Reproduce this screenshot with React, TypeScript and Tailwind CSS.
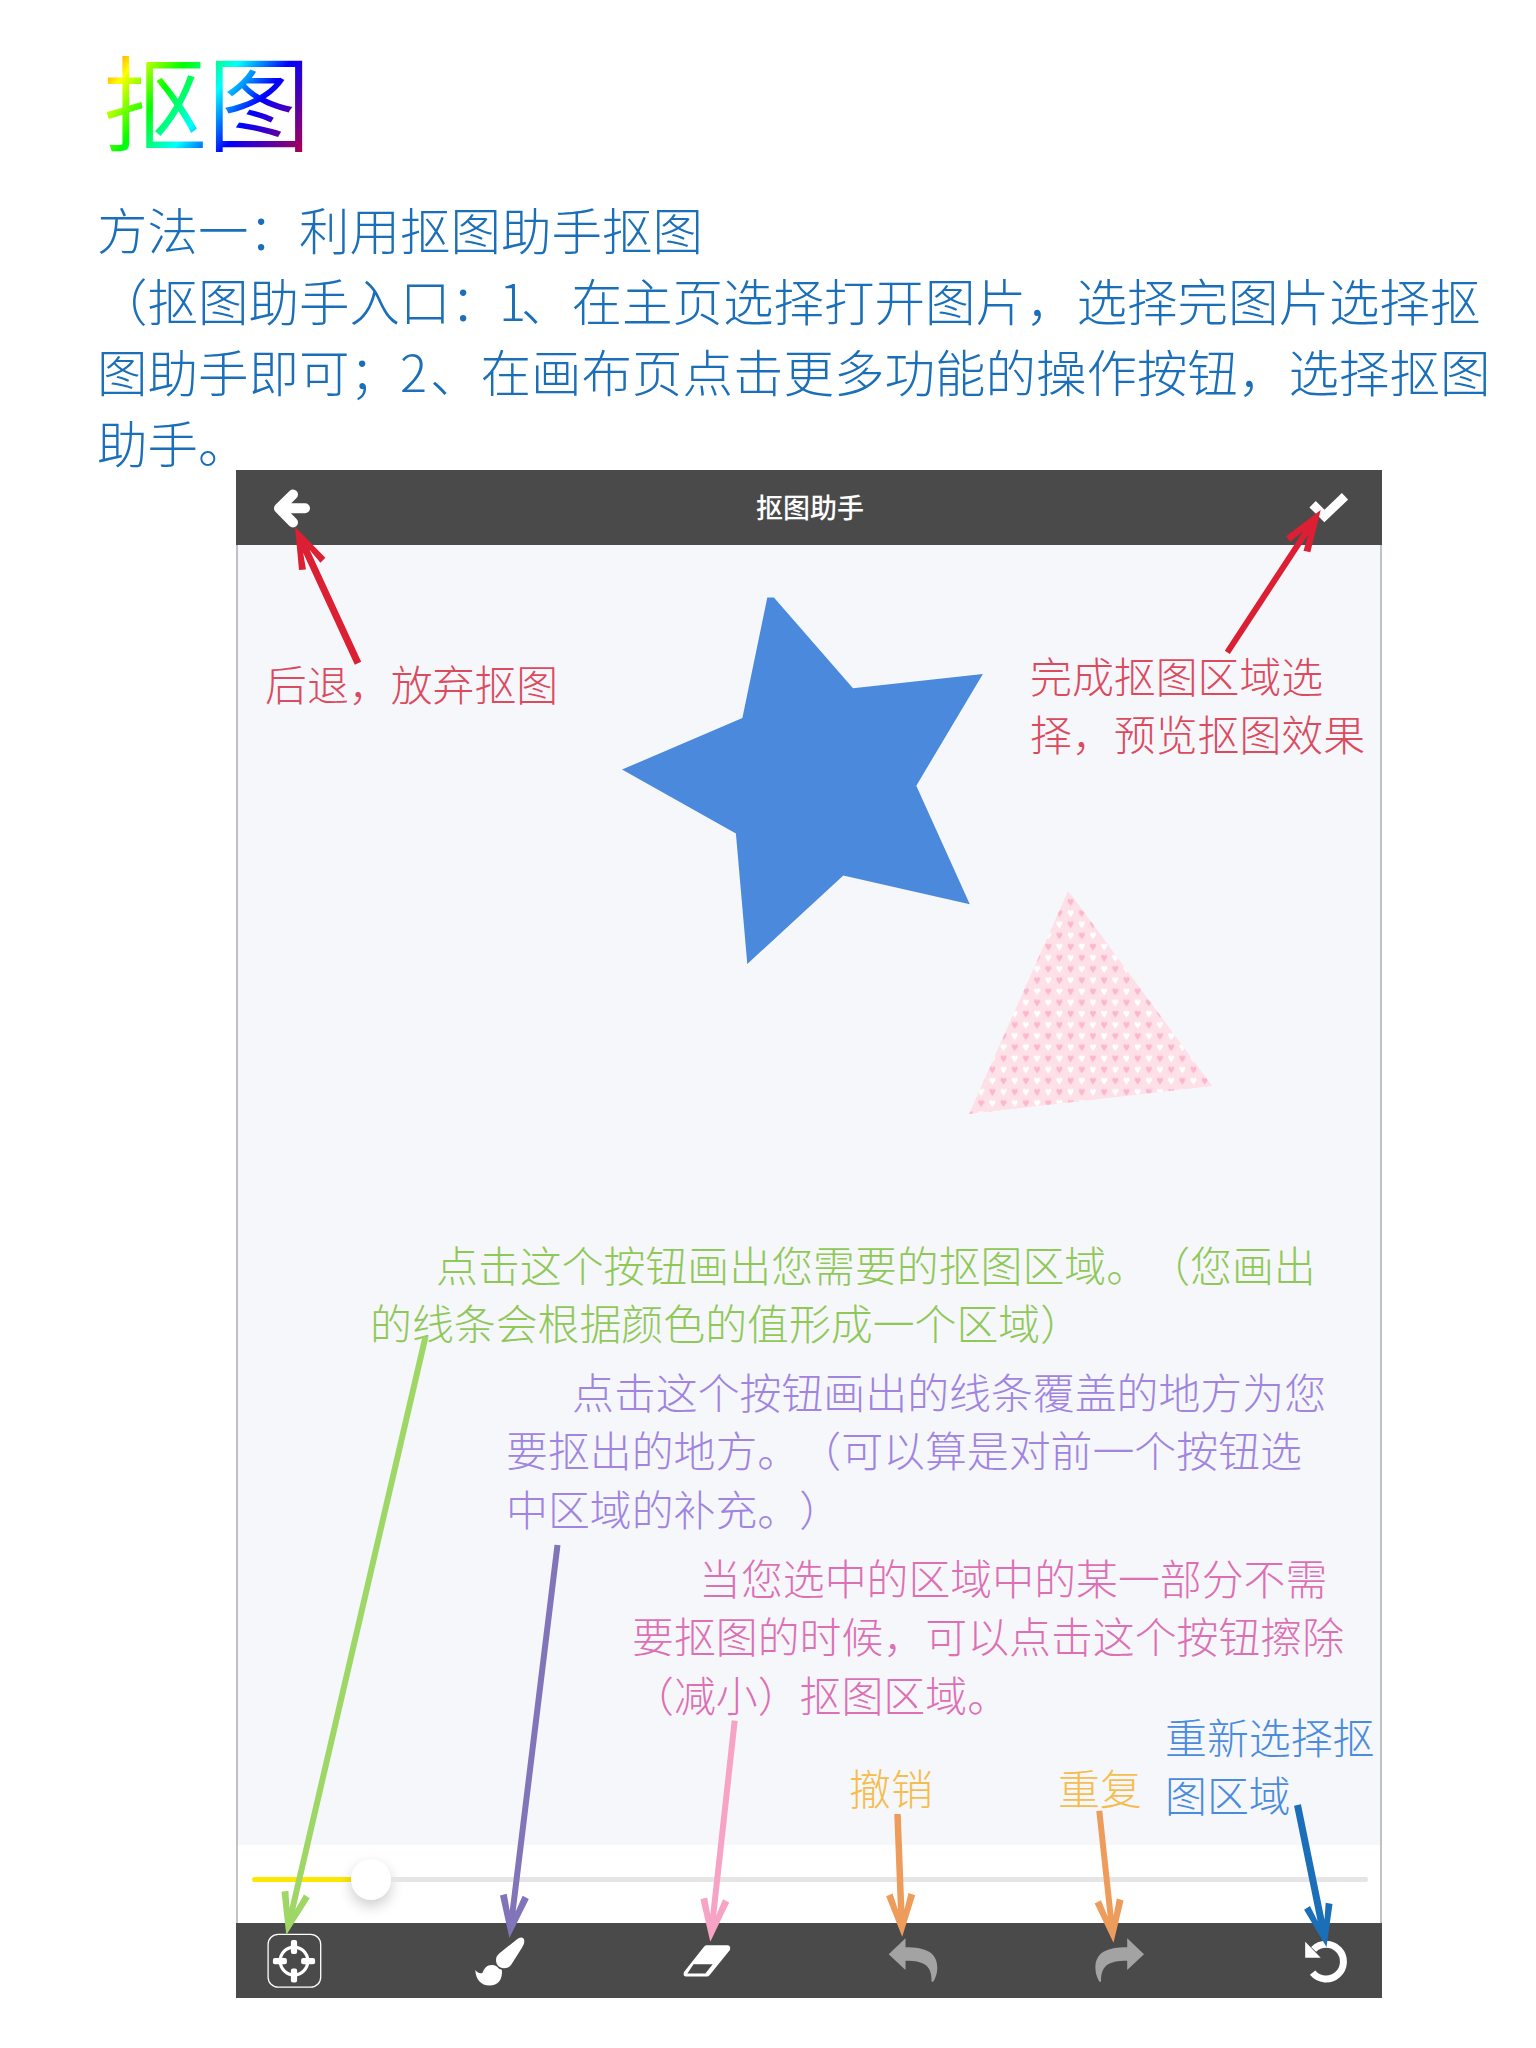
import type { ReactNode } from "react";

type Point = [number, number];

type ArrowSpec = { from: Point; to: Point; color: string; width?: number };

const ARROWS: ArrowSpec[] = [
  { from: [358, 663.3], to: [295, 526.7], color: "#dc1f32", width: 7 },
  { from: [1227.3, 652.3], to: [1320.7, 510], color: "#dc1f32" },
  { from: [425.5, 1336.7], to: [286.3, 1935], color: "#9fd766" },
  { from: [557.5, 1545], to: [509.4, 1938], color: "#8174b8" },
  { from: [734.7, 1720.7], to: [710.3, 1941.7], color: "#f7a3c6" },
  { from: [897.5, 1814], to: [902.2, 1936.7], color: "#ee9c5c", width: 6.5 },
  { from: [1099.3, 1810.7], to: [1113.5, 1942.7], color: "#ee9c5c" },
  { from: [1297.5, 1805], to: [1326.5, 1947], color: "#1a6fb8", width: 7 },
];

function Arrow({ from, to, color, width = 6 }: ArrowSpec) {
  const dx = to[0] - from[0];
  const dy = to[1] - from[1];
  const len = Math.hypot(dx, dy);
  const angle = (Math.atan2(dy, dx) * 180) / Math.PI;
  const h = width / 2;
  return (
    <polygon
      fill={color}
      transform={`translate(${to[0]} ${to[1]}) rotate(${angle})`}
      points={`0,0 -41,-14.5 -43.5,-8 -27,${-h} ${-len},${-h} ${-len},${h} -27,${h} -43.5,8 -41,14.5`}
    />
  );
}

function Note({ className, children }: { className: string; children: ReactNode }) {
  return (
    <p
      className={`absolute whitespace-pre text-[41.9px] leading-[58.4px] font-light ${className}`}
    >
      {children}
    </p>
  );
}

function Heart({ x, y, fill }: { x: number; y: number; fill: string }) {
  return (
    <path
      transform={`translate(${x} ${y})`}
      d="M0 3.8 L-3 -0.6 Q-3.2 -3.2 -1.6 -3.2 Q-0.3 -3.2 0 -1.6 Q0.3 -3.2 1.6 -3.2 Q3.2 -3.2 3 -0.6 Z"
      fill={fill}
    />
  );
}

function Tool({ viewBox, children }: { viewBox: string; children: ReactNode }) {
  return (
    <button className="h-[54px] w-[54px]">
      <svg viewBox={viewBox} className="block h-full w-full overflow-visible">
        {children}
      </svg>
    </button>
  );
}

const UNDO_PATH =
  "M888.7 1954.3 L905.5 1938.3 V1947.3 C926 1947.3 937.3 1952.5 937.3 1968 C937.3 1973.5 935.5 1978 933.3 1981.8 H931.6 C932 1966 925 1960.7 905.5 1960.7 V1970 Z";

export default function App() {
  return (
    <main
      lang="zh-CN"
      className="flex h-[2048px] w-[1536px] flex-col overflow-hidden bg-white font-['Noto_Sans_CJK_SC',sans-serif] [text-spacing-trim:space-all]"
    >
      <h1 className="mt-[31px] ml-[103px] h-[136px] w-[210px] bg-[linear-gradient(127deg,#ff0000_0px,#ffff00_43px,#00ff00_84px,#00ffff_127px,#0000ff_168px,#ff0000_262px)] bg-clip-text text-[104px] leading-[136px] font-[350] whitespace-nowrap text-transparent">
        抠图
      </h1>

      <div className="mt-[26px] ml-[97px] h-[277px] text-[50.5px] leading-[71px] font-light whitespace-nowrap text-[#1a6fb8]">
        <p>方法一：利用抠图助手抠图</p>
        <p>
          （抠图助手入口：<span className="-ml-[2px] tracking-[-5px]">1</span>
          、在主页选择打开图片，选择完图片选择抠
        </p>
        <p>
          图助手即可；<span className="tracking-[3px]">2</span>
          、在画布页点击更多功能的操作按钮，选择抠图
        </p>
        <p>助手。</p>
      </div>

      <section className="relative ml-[236px] flex h-[1528px] w-[1146px] flex-col">
        <header className="flex h-[75px] items-center justify-between bg-[#4a4a4a] pr-[34px] pl-[36px] text-white">
          <svg viewBox="272 489 40 40" className="h-[40px] w-[40px]" fill="none" stroke="#fff">
            <path
              d="M293 495.5 L279 509.3 L293 523.5 M281 509.3 H305"
              strokeWidth="10"
              strokeLinecap="round"
              strokeLinejoin="round"
            />
          </svg>
          <span className="text-[27px] font-medium">抠图助手</span>
          <svg viewBox="1308 489 40 40" className="h-[40px] w-[40px]">
            <path
              d="M1312.6 505.2 L1324.4 517 L1345 497.3"
              fill="none"
              stroke="#fff"
              strokeWidth="9"
            />
          </svg>
        </header>

        <div className="relative h-[1300px] border-x-2 border-[#bfc1c5] bg-[#f5f7fb]">
          <svg viewBox="238 545 1142 1300" className="block h-full w-full">
            <defs>
              <pattern
                id="hearts"
                x="1065"
                y="896.4"
                width="22.35"
                height="22.35"
                patternUnits="userSpaceOnUse"
              >
                <Heart x={5.6} y={5.6} fill="#fcb6cd" />
                <Heart x={16.8} y={16.8} fill="#fcb6cd" />
                <Heart x={16.8} y={5.6} fill="#ffffff" />
                <Heart x={5.6} y={16.8} fill="#ffffff" />
              </pattern>
            </defs>
            <polygon
              fill="#4a89dc"
              points="767.3,597.5 773.9,597.5 853,688.2 982.9,674 916.3,785.7 969.8,904.3 843.3,875.4 747.3,964 735.9,833.6 622,769.6 742.4,717.9"
            />
            <polygon fill="#fee0e8" points="1068.2,890.7 1212.2,1086 969,1114" />
            <polygon fill="url(#hearts)" points="1068.2,890.7 1212.2,1086 969,1114" />
          </svg>

          <Note className="top-[109px] left-[27px] text-[#dc4a5e]">后退，放弃抠图</Note>
          <Note className="top-[101px] left-[792px] text-[#dc4a5e]">
            {"完成抠图区域选\n择，预览抠图效果"}
          </Note>
          <Note className="top-[690px] left-[132px] indent-[66px] text-[#90c858]">
            {"点击这个按钮画出您需要的抠图区域。（您画出\n的线条会根据颜色的值形成一个区域）"}
          </Note>
          <Note className="top-[817px] left-[268px] indent-[66px] text-[#a084e0]">
            {"点击这个按钮画出的线条覆盖的地方为您\n要抠出的地方。（可以算是对前一个按钮选\n中区域的补充。）"}
          </Note>
          <Note className="top-[1003px] left-[394px] indent-[67px] text-[#dd70b4]">
            {"当您选中的区域中的某一部分不需\n要抠图的时候，可以点击这个按钮擦除\n（减小）抠图区域。"}
          </Note>
          <Note className="top-[1213px] left-[611px] text-[#f6bd4e]">撤销</Note>
          <Note className="top-[1213px] left-[820px] text-[#f6bd4e]">重复</Note>
          <Note className="top-[1162px] left-[927px] text-[#4a8bdd]">
            {"重新选择抠\n图区域"}
          </Note>
        </div>

        <div className="flex h-[78px] items-center border-x-2 border-[#c4c4c4] bg-white pr-[12px] pb-[9px] pl-[14px]">
          <div className="h-[5px] w-[99px] rounded-l-full bg-[#ffe600]" />
          <div className="h-[41px] w-[40px] shrink-0 rounded-full bg-white shadow-[0_6px_14px_rgba(0,0,0,0.2)]" />
          <div className="h-[5px] flex-1 rounded-r-full bg-[#e5e5e6]" />
        </div>

        <footer className="flex h-[75px] items-center justify-between bg-[#4a4a4a] pr-[29px] pl-[31px]">
          <Tool viewBox="266.7 1934 54 54">
            <rect
              x="267.8"
              y="1934.4"
              width="52.6"
              height="52.8"
              rx="10"
              fill="none"
              stroke="#fff"
              strokeWidth="1.3"
            />
            <circle cx="293.7" cy="1961" r="13.8" fill="none" stroke="#fff" strokeWidth="3.2" />
            <g fill="#fff">
              <rect x="290.6" y="1940" width="6.2" height="14" rx="2" />
              <rect x="290.6" y="1968.4" width="6.2" height="14" rx="2" />
              <rect x="272.6" y="1957.9" width="14" height="6.4" rx="2" />
              <rect x="300.8" y="1957.9" width="14" height="6.4" rx="2" />
            </g>
          </Tool>
          <Tool viewBox="473.7 1934 54 54">
            <g fill="#fff">
              <path d="M517.5 1939.4 C520.5 1936.5 525 1936.5 525 1941 C525 1944 523.8 1945.5 522.5 1948 L513 1963 C511 1966.5 508.5 1968.3 504.8 1968.3 C499.5 1968.3 496.7 1964 496.7 1960 C496.7 1957 498 1955.3 500.2 1953.3 Z" />
              <path d="M476 1970 C478.5 1973 481 1974.2 483.3 1972.7 C484.8 1968.5 487.5 1965 492.5 1965 Q495.5 1964.6 497.5 1966.5 Q499.5 1969.2 502.6 1969.8 C503.5 1980 498.5 1985.5 490.3 1985.5 C481.5 1985.5 476.5 1979.5 476 1970 Z" />
            </g>
          </Tool>
          <Tool viewBox="680.3 1934 54 54">
            <path
              fill="#fff"
              fillRule="evenodd"
              d="M707 1945.2 H728 Q731.5 1945.8 730.2 1950 L710 1975 Q708.8 1976.6 707 1976.6 H686 Q683 1976 684.3 1972 L704.5 1946.5 Q705.6 1945.2 707 1945.2 Z M693.8 1964.3 L687.7 1973.4 H705.7 L713 1964.3 Z"
            />
          </Tool>
          <Tool viewBox="886 1934 54 54">
            <path fill="#a3a3a3" d={UNDO_PATH} />
          </Tool>
          <Tool viewBox="1093 1934 54 54">
            <path fill="#a3a3a3" d={UNDO_PATH} transform="translate(2032.7 0) scale(-1 1)" />
          </Tool>
          <Tool viewBox="1298.8 1934 54 54">
            <path
              fill="none"
              stroke="#fff"
              strokeWidth="7"
              d="M1312.4 1972.6 A17.4 17.4 0 1 0 1313.4 1949.4"
            />
            <path fill="#fff" d="M1305 1941.7 V1957.7 H1320.5 Z" />
          </Tool>
        </footer>

        <svg
          viewBox="236 470 1146 1528"
          className="pointer-events-none absolute inset-0 h-full w-full"
        >
          {ARROWS.map((arrow, i) => (
            <Arrow key={i} {...arrow} />
          ))}
        </svg>
      </section>
    </main>
  );
}
